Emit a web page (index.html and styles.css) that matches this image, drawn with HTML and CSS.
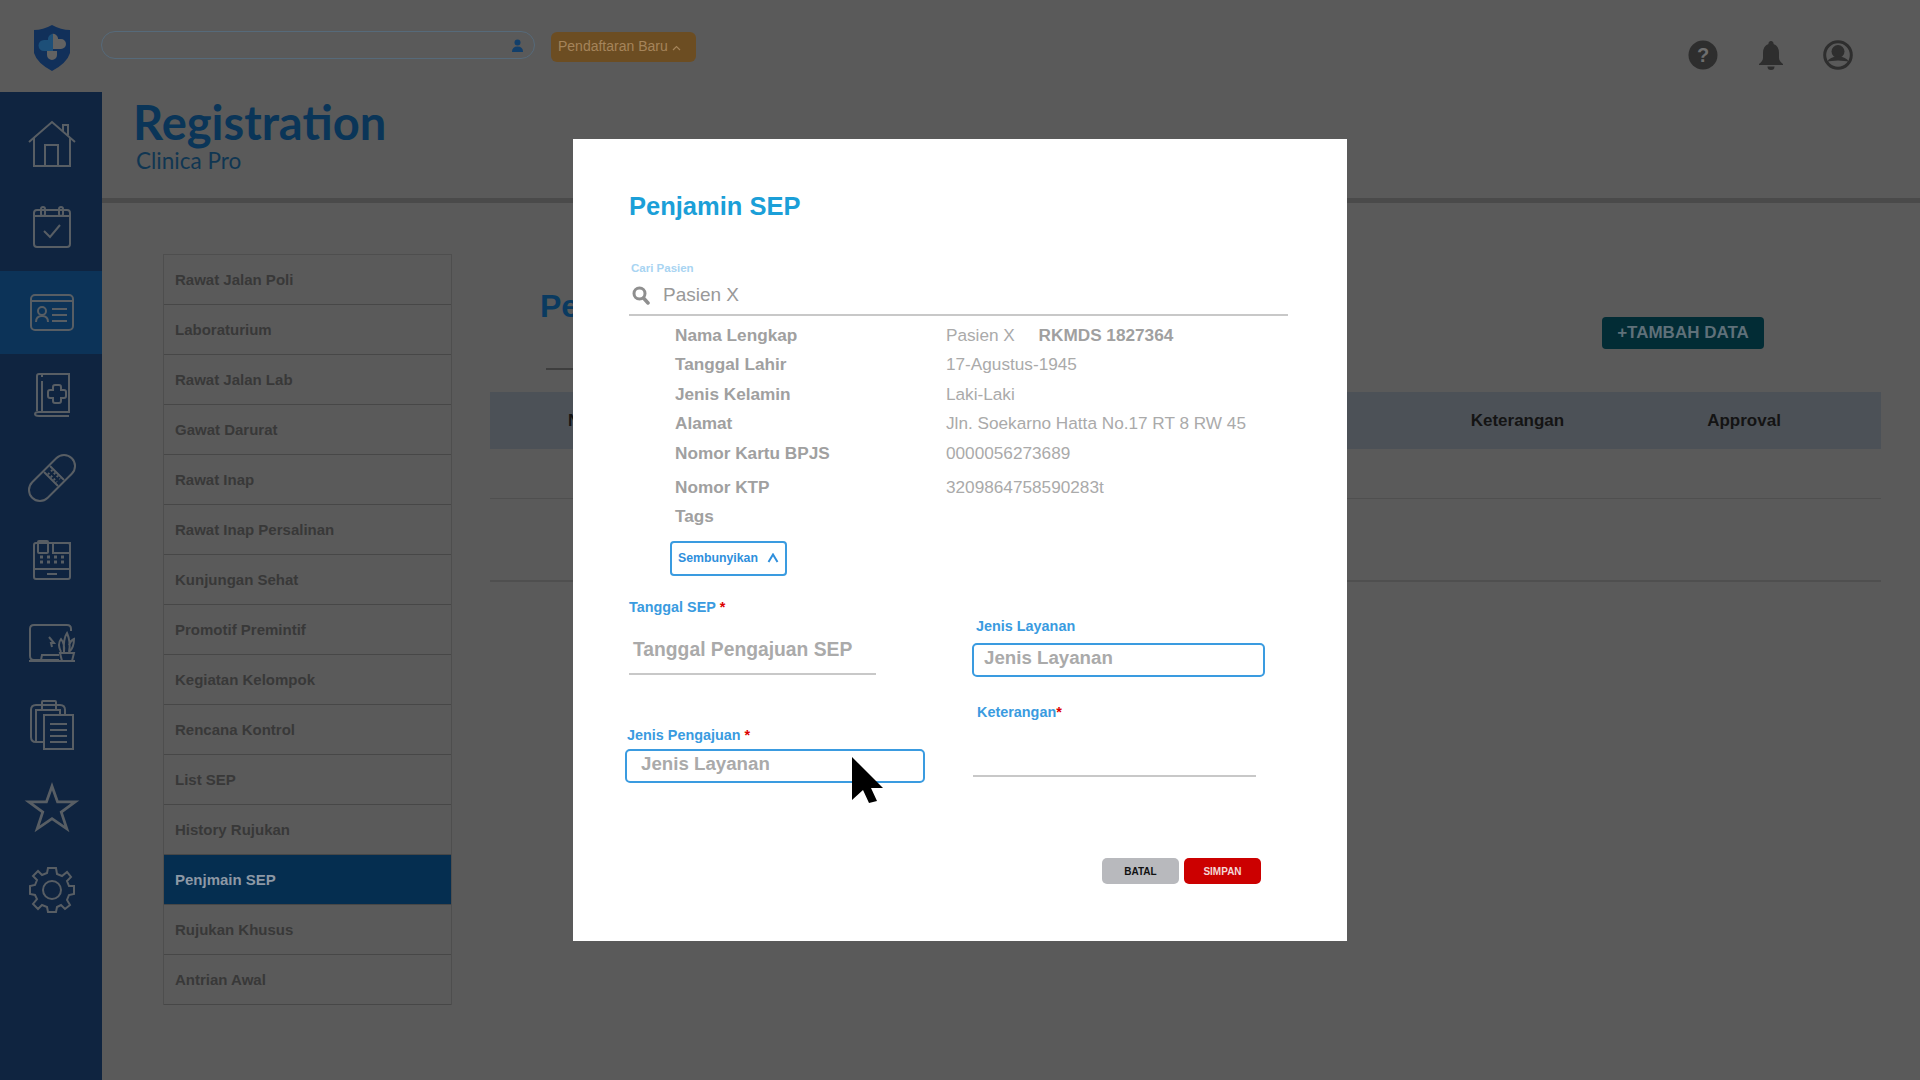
FILE: index.html
```html
<!DOCTYPE html>
<html>
<head>
  <title>Registration - Clinica Pro</title>
  <link rel="stylesheet" href="styles.css">
</head>
<body>
  <div class="app">
    <header class="topbar">
      <div class="logo-cell">
        <svg width="38" height="46" viewBox="0 0 38 46">
          <path d="M1 5 Q10 5 19 0 Q28 5 37 5 V28 Q34 38 19 46 Q4 38 1 28Z" fill="#11305a"/>
          <path d="M16 24 h12 a5 5 0 0 0 0 -10 h-3 v-1 a5 5 0 0 0 -6 -4 v15z M14 26 h10 v4 a5 5 0 0 1 -10 0z" fill="#626262"/>
          <path d="M20 9 a5 5 0 0 0 -5 5 v1 h-4 a5.500 5.500 0 0 0 0 11 h9z" fill="#1d4f78"/>
        </svg>
      </div>
      <div class="search-pill">
        <svg width="11" height="13" viewBox="0 0 11 13"><circle cx="5.500" cy="3.500" r="3" fill="#123f6b"/><path d="M0 13 Q0 7.500 5.500 7.500 Q11 7.500 11 13Z" fill="#123f6b"/></svg>
      </div>
      <button class="new-btn">Pendaftaran Baru
        <svg width="9" height="6" viewBox="0 0 9 6"><path d="M1 5 L4.500 1.500 L8 5" fill="none" stroke="#a5845a" stroke-width="1.200"/></svg>
      </button>
      <div class="top-icons">
        <svg width="30" height="30" viewBox="0 0 30 30"><circle cx="15" cy="15" r="14.500" fill="#2e2e2e"/><text x="15" y="22" class="help-mark">?</text></svg>
        <svg width="24" height="30" viewBox="0 0 24 30"><path d="M12 1 a2.500 2.500 0 0 1 2.500 3 Q20 6 20 13 V18 Q20 21 24 24 V25 H0 V24 Q4 21 4 18 V13 Q4 6 9.500 4 A2.500 2.500 0 0 1 12 1Z" fill="#2e2e2e"/><path d="M8.500 26.500 H15.500 A3.500 3.500 0 0 1 8.500 26.500Z" fill="#2e2e2e"/></svg>
        <svg width="30" height="30" viewBox="0 0 30 30"><circle cx="15" cy="15" r="13.300" fill="none" stroke="#2e2e2e" stroke-width="3"/><circle cx="15" cy="11.500" r="6.500" fill="#2e2e2e"/><path d="M4 22 Q7 16.500 15 16.500 Q23 16.500 26 22 Q22 20.500 15 20.500 Q8 20.500 4 22Z" fill="#2e2e2e"/></svg>
      </div>
    </header>

    <div class="below">
      <nav class="sidenav">
        <a class="nav-item">
          <svg width="48" height="46" viewBox="0 0 48 46" class="nav-icon"><path d="M1 21 L24 1 L47 21 M6 17 V45 H42 V17 M17 45 V24 H30 V45 M35 10 V4 H40 V14"/></svg>
        </a>
        <a class="nav-item">
          <svg width="38" height="42" viewBox="0 0 38 42" class="nav-icon"><rect x="1" y="4" width="36" height="37" rx="3"/><path d="M1 10 H37"/><rect x="8" y="1" width="4" height="9" rx="2"/><rect x="26" y="1" width="4" height="9" rx="2"/><path d="M11 25 L17 31 L27 19"/></svg>
        </a>
        <a class="nav-item nav-active">
          <svg width="44" height="37" viewBox="0 0 44 37" class="nav-icon"><rect x="1" y="1" width="42" height="35" rx="4"/><path d="M1 7 H43"/><circle cx="12" cy="17" r="4"/><path d="M6 28 Q6 22 12 22 Q18 22 18 28 M22 15 H37 M22 21 H37 M22 27 H37"/></svg>
        </a>
        <a class="nav-item">
          <svg width="36" height="44" viewBox="0 0 36 44" class="nav-icon"><path d="M3 38 V3 Q3 1 5 1 H35 V39 H5 Q1 39 1 41 Q1 43 5 43 H35 M8 1 V4 M8 8 V39"/><path d="M21 12 h4 a2 2 0 0 1 2 2 v3 h3 a2 2 0 0 1 2 2 v4 a2 2 0 0 1 -2 2 h-3 v3 a2 2 0 0 1 -2 2 h-4 a2 2 0 0 1 -2 -2 v-3 h-3 a2 2 0 0 1 -2 -2 v-4 a2 2 0 0 1 2 -2 h3 v-3 a2 2 0 0 1 2 -2z"/></svg>
        </a>
        <a class="nav-item">
          <svg width="48" height="48" viewBox="0 0 48 48" class="nav-icon"><rect x="-4" y="13" width="56" height="22" rx="11" transform="rotate(-45 24 24)"/><path d="M16 18 L30 32 M22 12 L36 26"/><path d="M20 19 L29 28 M23 16 L32 25" stroke-dasharray="2 2"/></svg>
        </a>
        <a class="nav-item">
          <svg width="38" height="40" viewBox="0 0 38 40" class="nav-icon"><rect x="1" y="3" width="36" height="36" rx="2"/><rect x="5" y="1" width="10" height="12" rx="1"/><rect x="20" y="3" width="17" height="10"/><path d="M1 29 H37 M14 34 H24"/><path d="M7 17 H10 M14 17 H17 M21 17 H24 M28 17 H31 M7 22 H10 M14 22 H17 M21 22 H24 M28 22 H31" stroke-width="3"/></svg>
        </a>
        <a class="nav-item">
          <svg width="46" height="38" viewBox="0 0 46 38" class="nav-icon"><path d="M30 36 H5 Q1 36 1 32 V5 Q1 1 5 1 H38 Q42 1 42 5 V7 M12 36 L13 31 H30 M0 37 H46"/><path d="M31 29 H45 L43 37 H33Z M32 28 Q28 20 32 15 Q36 20 35 28 M35 28 Q34 15 38 9 Q42 18 40 28 M40 28 Q45 24 45 15 Q41 17 40 21"/><path d="M20 13 L25 19 L22 19 L23 23"/></svg>
        </a>
        <a class="nav-item">
          <svg width="44" height="50" viewBox="0 0 44 50" class="nav-icon"><path d="M14 42 H6 Q1 42 1 37 V10 Q1 5 6 5 H30 Q35 5 35 10 V15"/><path d="M6 42 V10 H30 V15"/><rect x="12" y="1" width="14" height="9" rx="1"/><rect x="14" y="15" width="29" height="34"/><path d="M20 24 H37 M20 30 H37 M20 36 H37 M20 42 H37"/></svg>
        </a>
        <a class="nav-item">
          <svg width="50" height="47" viewBox="0 0 54 50" class="nav-icon nav-thick"><path d="M27 2 L33 19 H52 L37 30 L43 48 L27 37 L11 48 L17 30 L2 19 H21Z"/></svg>
        </a>
        <a class="nav-item">
          <svg width="46" height="46" viewBox="0 0 46 46" class="nav-icon"><circle cx="23" cy="23" r="9"/><path d="M19 1 H27 L28 7 L33 9 L38 5 L42 10 L38 14 L40 19 L45 19 V27 L40 28 L38 33 L41 38 L36 42 L32 38 L28 40 L27 45 H19 L18 40 L13 38 L9 42 L4 37 L8 32 L6 28 L1 27 V19 L6 18 L8 13 L4 9 L9 4 L13 8 L18 6Z"/></svg>
        </a>
      </nav>

      <main class="content">
        <div class="brand">
          <div class="brand-name">Registration</div>
          <div class="brand-sub">Clinica Pro</div>
        </div>
        <div class="work">
          <ul class="menu">
            <li>Rawat Jalan Poli</li>
            <li>Laboraturium</li>
            <li>Rawat Jalan Lab</li>
            <li>Gawat Darurat</li>
            <li>Rawat Inap</li>
            <li>Rawat Inap Persalinan</li>
            <li>Kunjungan Sehat</li>
            <li>Promotif Premintif</li>
            <li>Kegiatan Kelompok</li>
            <li>Rencana Kontrol</li>
            <li>List SEP</li>
            <li>History Rujukan</li>
            <li class="menu-active">Penjmain SEP</li>
            <li>Rujukan Khusus</li>
            <li>Antrian Awal</li>
          </ul>
          <section class="panel">
            <div class="panel-head">
              <h2 class="panel-title">Pe</h2>
              <button class="add-btn">+TAMBAH DATA</button>
            </div>
            <div class="tab-line"></div>
            <div class="table-head">
              <span class="th-no">No</span>
              <span class="th-ket">Keterangan</span>
              <span class="th-app">Approval</span>
            </div>
            <div class="table-row"></div>
            <div class="table-row table-row-tall"></div>
          </section>
        </div>
      </main>
    </div>
  </div>

  <div class="modal">
    <h1 class="modal-title">Penjamin SEP</h1>
    <div class="cari-label">Cari Pasien</div>
    <div class="cari-field">
      <svg width="18" height="19" viewBox="0 0 18 19"><circle cx="7.500" cy="7.500" r="5.500" fill="none" stroke="#8f8f8f" stroke-width="3"/><path d="M11.500 12 L16 17" stroke="#8f8f8f" stroke-width="3.500" stroke-linecap="round"/></svg>
      <span>Pasien X</span>
    </div>
    <dl class="info">
      <div class="info-row"><dt>Nama Lengkap</dt><dd>Pasien X <b class="rm">RKMDS 1827364</b></dd></div>
      <div class="info-row"><dt>Tanggal Lahir</dt><dd>17-Agustus-1945</dd></div>
      <div class="info-row"><dt>Jenis Kelamin</dt><dd>Laki-Laki</dd></div>
      <div class="info-row"><dt>Alamat</dt><dd>Jln. Soekarno Hatta No.17 RT 8 RW 45</dd></div>
      <div class="info-row"><dt>Nomor Kartu BPJS</dt><dd>0000056273689</dd></div>
      <div class="info-row info-ktp"><dt>Nomor KTP</dt><dd>3209864758590283t</dd></div>
      <div class="info-row"><dt>Tags</dt><dd></dd></div>
    </dl>
    <button class="hide-btn">Sembunyikan
      <svg width="12" height="10" viewBox="0 0 12 10"><path d="M1.500 9 L6 1.500 L10.500 9" fill="none" stroke="#2f8fdc" stroke-width="2"/></svg>
    </button>
    <div class="form-grid">
      <div class="form-col form-left">
        <label class="f-label">Tanggal SEP <i>*</i></label>
        <div class="line-input line-date">Tanggal Pengajuan SEP</div>
        <label class="f-label label-pengajuan">Jenis Pengajuan <i>*</i></label>
        <div class="box-input box-pengajuan">Jenis Layanan</div>
      </div>
      <div class="form-col form-right">
        <label class="f-label">Jenis Layanan</label>
        <div class="box-input box-layanan">Jenis Layanan</div>
        <label class="f-label label-ket">Keterangan<i>*</i></label>
        <div class="line-input line-ket"></div>
      </div>
    </div>
    <div class="modal-actions">
      <button class="btn-batal">BATAL</button>
      <button class="btn-simpan">SIMPAN</button>
    </div>
  </div>

  <svg class="cursor" width="32" height="46" viewBox="0 0 32 46"><path d="M0 0 L31 31 L19 31 L25 44 L17 46 L11 33 L0 43Z" fill="#000"/></svg>
</body>
</html>
```

FILE: styles.css
```css
* {
  box-sizing: border-box;
}

html, body {
  margin: 0;
  padding: 0;
  width: 1920px;
  height: 1080px;
  overflow: hidden;
}

body {
  background-color: #5a5a5a;
  font-family: "Liberation Sans", Arial, sans-serif;
  position: relative;
}

button {
  font-family: inherit;
  border: none;
  padding: 0;
}

.app {
  display: flex;
  flex-direction: column;
  height: 1080px;
}

/* top bar */
.topbar {
  height: 92px;
  display: flex;
  align-items: flex-start;
  flex-shrink: 0;
}

.logo-cell {
  width: 101px;
  padding: 25px 0 0 33px;
}

.search-pill {
  width: 434px;
  height: 28px;
  margin-top: 31px;
  border: 1px solid #566a7a;
  border-radius: 14px;
  display: flex;
  align-items: center;
  justify-content: flex-end;
  padding-right: 11px;
}

.new-btn {
  width: 145px;
  height: 30px;
  margin: 32px 0 0 16px;
  padding: 0 0 2px 7px;
  background-color: #6c4d22;
  border-radius: 6px;
  color: #a5845a;
  font-size: 14px;
  text-align: left;
}

.top-icons {
  margin-left: auto;
  padding: 40px 67px 0 0;
  display: flex;
  gap: 40.500px;
}

.below {
  display: flex;
  flex: 1;
}

/* left icon strip */
.sidenav {
  width: 102px;
  height: 988px;
  background-color: #0f2440;
  padding: 11px 0 0 2px;
}

.nav-item {
  height: 82.500px;
  display: flex;
  align-items: center;
  justify-content: center;
}

.nav-active {
  height: 83px;
  margin: 3px 0 0 -2px;
  padding-left: 2px;
  background-color: #0c3358;
}

.nav-icon {
  fill: none;
  stroke: #585e64;
  stroke-width: 2;
  overflow: visible;
}

.nav-thick {
  stroke-width: 3;
}

.help-mark {
  fill: #6e6e6e;
  font-family: "Liberation Sans", sans-serif;
  font-size: 20px;
  font-weight: bold;
  text-anchor: middle;
}

/* page */
.content {
  flex: 1;
}

.brand {
  height: 111px;
  padding: 4px 0 0 31px;
  border-bottom: 5px solid #4a4a4a;
}

.brand-name {
  font-family: Lato, sans-serif;
  font-weight: bold;
  font-size: 47px;
  line-height: 52px;
  color: #0a3558;
}

.brand-sub {
  font-family: Lato, sans-serif;
  font-size: 22.500px;
  line-height: 24px;
  margin-top: 1px;
  color: #103652;
  padding-left: 3px;
}

.work {
  display: flex;
  padding: 51px 0 0 61px;
}

.menu {
  list-style: none;
  margin: 0;
  padding: 0;
  width: 289px;
  border: 1px solid #4e4e4e;
  border-bottom: none;
}

.menu li {
  height: 50px;
  padding-left: 11px;
  line-height: 50px;
  font-size: 15px;
  font-weight: bold;
  color: #383838;
  border-bottom: 1px solid #474747;
}

.menu li.menu-active {
  background-color: #052e50;
  color: #8d98a5;
}

.panel {
  width: 1391px;
  margin-left: 38px;
}

.panel-head {
  height: 114px;
  padding: 36px 117px 0 50px;
  display: flex;
  justify-content: space-between;
  align-items: flex-start;
}

.panel-title {
  margin: 0;
  font-size: 32px;
  line-height: 32px;
  color: #0a3a60;
}

.add-btn {
  width: 162px;
  height: 32px;
  margin-top: 27px;
  background-color: #022c35;
  border-radius: 4px;
  color: #5f7079;
  font-size: 17px;
  font-weight: bold;
}

.tab-line {
  width: 300px;
  height: 2px;
  margin-left: 56px;
  background-color: #3e3e3e;
}

.table-head {
  height: 57px;
  margin-top: 22px;
  background-color: #4c5157;
  display: flex;
  align-items: center;
  font-size: 17px;
  font-weight: bold;
  color: #141414;
}

.th-no {
  margin-left: 78px;
}

.th-ket {
  margin-left: 880px;
}

.th-app {
  margin-left: 143px;
}

.table-row {
  height: 50px;
  border-bottom: 1px solid #4f4f4f;
}

.table-row-tall {
  height: 83px;
  border-bottom-width: 2px;
}

/* dialog */
.modal {
  position: absolute;
  left: 573px;
  top: 139px;
  width: 774px;
  height: 802px;
  background-color: #fff;
  padding: 52px 59px 0 56px;
}

.modal-title {
  margin: 0;
  font-size: 25.500px;
  line-height: 30px;
  color: #1b9fd8;
}

.cari-label {
  margin: 40px 0 0 2px;
  font-size: 11.500px;
  font-weight: bold;
  line-height: 14px;
  color: #a8d4f2;
}

.cari-field {
  height: 41px;
  display: flex;
  align-items: center;
  gap: 13px;
  padding: 1px 0 0 3px;
  border-bottom: 2px solid #c8c8c8;
  font-size: 19px;
  color: #999;
}

.info {
  margin: 4.500px 0 0;
}

.info-row {
  display: flex;
  height: 29.500px;
  align-items: center;
  padding-left: 46px;
  font-size: 17.200px;
}

.info-ktp {
  margin-top: 4.500px;
}

.info dt {
  width: 271px;
  font-weight: bold;
  color: #a0a0a0;
}

.info dd {
  margin: 0;
  color: #aaa;
}

.rm {
  margin-left: 19px;
  color: #a0a0a0;
}

.hide-btn {
  display: flex;
  align-items: center;
  gap: 9px;
  width: 117px;
  height: 35px;
  margin: 9px 0 0 41px;
  padding-left: 6px;
  background-color: #fff;
  border: 2px solid #3a9be0;
  border-radius: 4px;
  font-size: 12.300px;
  font-weight: bold;
  color: #2f8fdc;
}

.form-grid {
  display: flex;
  margin-top: 23.500px;
}

.form-col {
  display: flex;
  flex-direction: column;
  align-items: flex-start;
}

.form-left {
  width: 347px;
}

.f-label {
  font-size: 14.400px;
  font-weight: bold;
  line-height: 16px;
  color: #3a9be0;
}

.f-label i {
  color: #d00;
  font-style: normal;
}

.line-input {
  border-bottom: 2px solid #c8c8c8;
  font-size: 19.300px;
  font-weight: bold;
  color: #aaa;
}

.line-date {
  width: 247px;
  height: 60px;
  padding: 24px 0 0 4px;
}

.label-pengajuan {
  margin: 52px 0 0 -2px;
}

.box-input {
  height: 34px;
  border: 2px solid #3a9be0;
  border-radius: 5px;
  font-size: 18.700px;
  font-weight: bold;
  color: #aaa;
  line-height: 26px;
}

.box-pengajuan {
  width: 300px;
  margin: 6px 0 0 -4px;
  padding-left: 14px;
}

.form-right {
  padding-top: 19px;
}

.box-layanan {
  width: 293px;
  margin: 9px 0 0 -4px;
  padding-left: 10px;
}

.label-ket {
  margin: 27px 0 0 1px;
}

.line-ket {
  width: 283px;
  height: 57px;
  margin-left: -3px;
}

.modal-actions {
  display: flex;
  gap: 5px;
  margin: 75px 0 0 473px;
}

.modal-actions button {
  width: 77px;
  height: 26px;
  border-radius: 5px;
  font-size: 10px;
  font-weight: bold;
}

.btn-batal {
  background-color: #b8b9bd;
  color: #111;
}

.btn-simpan {
  background-color: #cc0000;
  color: #f4d6d6;
}

.cursor {
  position: absolute;
  left: 852px;
  top: 757px;
}
```
